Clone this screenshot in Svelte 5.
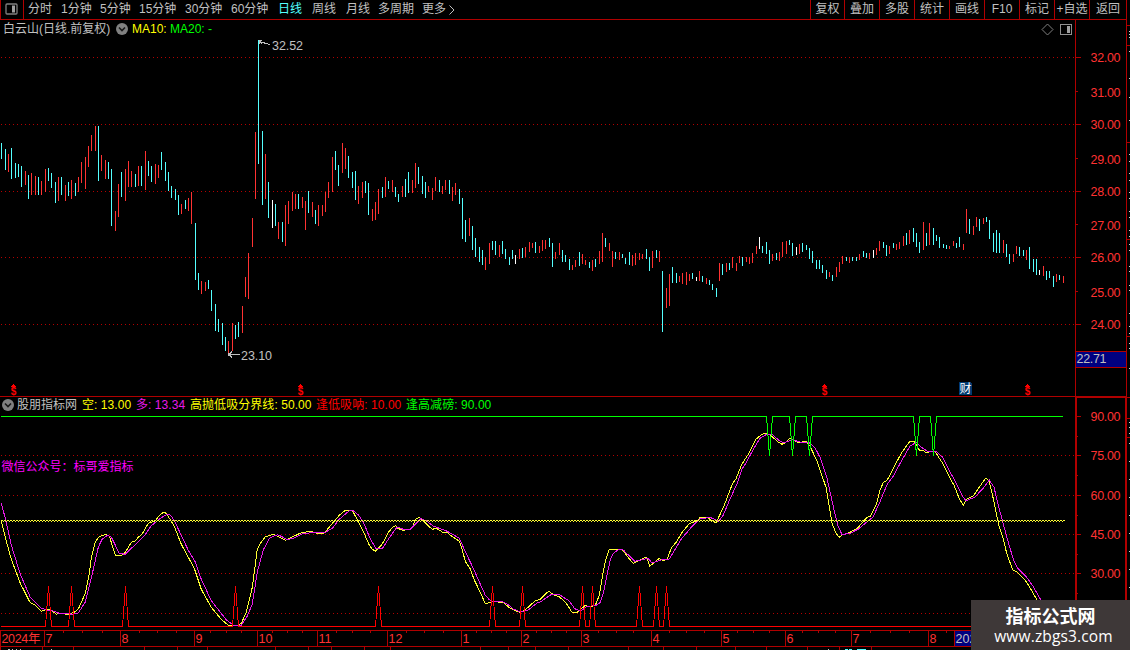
<script>
  const periods = [
    ['分时', 33], ['1分钟', 39], ['5分钟', 39], ['15分钟', 46], ['30分钟', 46], ['60分钟', 47],
    ['日线', 34], ['周线', 34], ['月线', 32], ['多周期', 44], ['更多', 26]
  ];
  const tools = [
    ['复权', 34], ['叠加', 35], ['多股', 35], ['统计', 35], ['画线', 35],
    ['F10', 35], ['标记', 35], ['+自选', 35], ['返回', 38]
  ];
  const legend = [
    ['空: 13.00', '#ffff00', 54], ['多: 13.34', '#e81ae8', 54], ['高抛低吸分界线: 50.00', '#ffff00', 126],
    ['逢低吸呐: 10.00', '#ff0000', 90], ['逢高减磅: 90.00', '#00ff00', 90]
  ];

  // Daily ranges, "x high low colour", stored in thirds of a pixel from each block's origin.
  const blocks = [
    [0, 120, `4 69 117 c,16 87 150 c,25 102 156 r,34 84 177 c,46 129 174 c,55 132 171 c,64 138 201 c,76 153 195 r,85 165 237 c,94 159 225 r,106 168 225 r,115 171 225 c,124 183 225 r,136 147 216 r,145 144 183 c,154 159 204 c,166 186 249 c,175 171 243 r,184 171 225 c,196 195 243 r,205 186 228 c,214 180 237 r,226 189 228 c,235 171 216 r,244 126 189 r,256 111 207 r,265 78 141 r,274 45 93 r,286 18 93 r,295 18 183 c,304 105 153 r,316 120 177 r,325 126 177 c,334 147 318 c,346 273 333 r,355 192 291 r,364 156 231 c,376 147 243 r,385 123 201 r,394 153 201 r,406 162 201 c,415 138 198 r,424 138 198 c,436 93 210 r,445 123 168 c,454 138 186 c,466 132 192 r,475 135 174 r,484 96 150 c,496 126 183 c,505 156 213 c,514 198 234 c,526 207 240 c,535 225 285 c,544 252 282 r,556 240 267 c,565 234 273 r,574 216 312 r,586 309 480 c,595 459 510 c,604 483 522 r,616 486 513 r,625 480 507 c,634 510 573 c,646 552 633 c,655 597 636 c,667 609 675 c,676 651 693 c,685 663 705 r,697 609 693 r,706 615 657 c,715 606 651 c,727 558 639 r,736 471 531 r,745 399 537 r,757 294 381 r,766 36 237 r`],
    [220, 30, `115 30 402 c,127 303 525 c,136 372 507 r,145 456 564 c,157 510 594 w,166 522 588 c,175 576 627 r,187 576 636 c,196 525 648 r,205 513 582 r,217 486 543 r,226 492 537 r,235 492 537 c,247 501 534 r,256 513 600 r,265 483 549 c,277 516 561 r,286 540 582 c,295 525 588 r,307 525 558 r,316 486 546 r,325 456 504 r,337 381 486 r,346 363 420 c,355 405 468 c,367 339 429 r,376 354 417 r,385 378 444 c,397 426 474 c,406 423 510 c,415 468 522 r,427 456 504 r,436 453 489 c,445 459 555 c,457 537 573 r,466 516 570 r,475 477 552 r,487 471 504 c,496 441 501 r,505 453 477 c,517 450 486 r,526 471 501 c,535 492 516 c,547 468 501 r,556 447 501 c,565 426 489 c,577 450 489 r,586 399 474 r,595 411 462 c,607 438 492 c,616 456 504 c,625 468 486 r,637 474 510 r,646 441 483 r,658 450 486 c,667 468 492 r,676 450 480 r,688 450 492 c,697 471 513 r,706 459 495 r,718 477 522 c`],
    [450, 170, `37 84 207 c,46 150 216 c,58 144 198 r,67 168 240 c,76 204 261 c,88 231 276 c,97 240 285 c,106 261 300 r,118 219 282 r,127 213 240 c,136 213 255 c,148 225 261 r,157 213 252 c,166 237 267 c,178 261 285 c,187 240 267 c,196 255 282 w,208 237 267 r,217 234 264 c,226 231 261 r,238 216 246 r,247 219 234 r,256 216 249 c,268 228 249 r,277 210 243 r,286 210 237 r,298 204 231 c,307 219 291 c,316 246 267 r,328 219 255 r,337 240 276 c,346 255 276 c,358 267 300 c,367 285 300 r,376 270 291 r,388 246 288 c,397 252 282 r,406 270 285 r,418 276 294 c,427 270 303 r,436 267 291 c,448 243 282 r,457 189 276 r,466 204 231 c,478 219 243 r,487 243 291 r,496 246 267 c,508 246 270 r,517 252 264 c,526 264 282 c,538 246 285 c,547 255 288 r,556 249 285 r,568 249 270 r,577 252 267 r,589 237 267 c,598 261 303 c,607 243 294 r,619 240 264 c,628 243 276 r,637 303 486 c,649 354 414 r,658 312 408 r,667 291 339 c,679 309 339 c,688 318 336 r,697 309 342 r,709 306 345 r,718 312 333 r,727 309 327 c,739 321 333 w,748 303 333 r,757 318 336 c,769 324 342 r,778 330 345 c,787 342 360 c,799 354 381 c`],
    [710, 190, `28 219 273 r,37 222 255 c,49 219 246 r,58 219 240 c,67 201 234 r,79 219 243 r,88 198 219 r,97 201 228 c,109 201 216 r,118 201 222 r,127 189 219 r,139 168 192 r,148 141 177 w,157 168 189 c,169 156 192 c,178 180 222 c,187 192 213 r,199 189 210 c,208 186 213 r,217 156 201 r,229 153 192 r,238 150 165 c,247 159 198 c,259 171 195 w,268 162 192 r,277 159 186 c,289 165 180 c,298 174 207 c,307 183 219 c,319 210 237 c,328 210 237 c,337 225 249 c,349 240 267 c,358 246 261 r,367 255 273 c,379 231 261 r,388 216 246 r,397 198 222 r,409 201 213 c,418 201 219 r,427 201 213 c,439 201 213 c,448 192 210 r,460 183 201 c,469 189 204 c,478 189 207 r,490 180 204 w,499 174 195 r,508 153 183 r,520 156 174 c,529 165 198 c,538 168 192 r,550 159 174 c,559 162 180 r,568 156 177 r,580 138 168 r,589 129 165 c,598 120 162 r,610 114 156 c,619 129 171 c,628 156 189 c,640 96 180 r,649 129 168 c,658 99 165 r,670 114 165 c,679 135 153 c,688 141 174 c,700 162 174 c,709 165 177 c,718 168 177 r,730 153 168 r,739 159 174 c,748 141 171 c,760 162 180 r,769 57 129 r,778 87 132 c,790 108 135 r,799 81 111 r,808 87 123 c,820 84 102 r,829 81 96 c,838 90 147 c,850 129 186 c,859 120 189 c,868 129 189 c,880 150 189 r,889 162 201 c,898 192 222 c,910 192 216 r,919 168 192 r,928 171 198 c,940 180 198 c,949 180 210 r,958 171 237 c,970 207 246 c,979 207 255 c,988 240 255 w,1000 228 258 r,1009 243 270 c,1018 243 264 c,1030 258 291 c,1039 252 276 r,1048 255 270 c,1060 258 279 r`]
  ];
  const tone = { r: '#ff3232', c: '#54ffff', w: '#ffffff' };
  const bars = blocks.flatMap(([ox, oy, s]) =>
    s.split(',').map((row) => {
      const [x, a, b, k] = row.split(' ');
      return { x: ox + Math.floor(+x / 3), y: oy + Math.round(+a / 3), h: Math.round((b - a) / 3), fill: tone[k] };
    })
  );

  const trace = (parts) =>
    parts.flatMap(([ox, oy, s]) =>
      s.split(' ').map((p) => {
        const [x, y] = p.split(',');
        return `${(ox + x / 3).toFixed(1)},${(oy + y / 3).toFixed(1)}`;
      })
    ).join(' ');

  const shortLine = trace([
    [0, 490, '4,94 16,142 34,208 61,280 90,337 106,346 124,364 142,358 154,360 169,373 175,370 205,373 223,367 235,357 256,310 268,250 274,202 286,157 295,142 316,133 328,138 346,196 364,196 376,187 394,157 406,153 415,142 427,131 445,100 466,92 478,76 490,67 499,70 523,109 544,163 583,235 604,298 634,352 664,388 685,406 712,406 724,400 739,367 757,292 772,178 781,160 796,140 820,133 856,151 904,128 934,124 946,129 970,130 976,125 1018,76'],
    [340, 490, '16,61 37,62 52,88 70,124 86,162 97,178 106,184 127,162 145,127 160,110 168,107 172,115 190,121 208,118 218,112 226,88 237,82 250,92 268,110 277,118 289,115 307,126 322,128 340,142 358,154 367,180 376,214 391,237 403,270 421,307 436,341 457,335 490,337 508,353 538,367 554,361 586,332 601,328 620,308 628,304 640,314 658,320 679,340 697,368 712,367 736,346 748,351 766,346 778,316 787,262 796,214 808,178 847,179 865,203 880,220 898,211 916,202 922,205 929,229 940,220 958,205 970,213 982,206 994,174 1010,155 1024,130 1048,101 1072,92'],
    [700, 400, '0,353 24,354 48,369 72,318 97,252 108,236 126,192 148,158 168,118 184,104 198,99 212,106 234,126 246,133 258,127 270,115 280,121 294,127 320,125 330,138 352,186 378,262 396,370 408,400 418,412 428,404 442,401 472,385 500,353 512,348 530,310 540,270 550,248 562,240 580,205 604,160 628,126 642,124 658,150 670,152 680,159 692,154 706,156 728,190 750,234 762,256 778,296 790,316 800,298 820,288 832,270 858,233 868,246 880,296 896,374 908,410 920,460 938,510 952,517 978,544 1000,580 1012,602 1030,640']
  ]);
  const longLine = trace([
    [0, 490, '4,40 16,85 34,165 61,253 91,322 124,355 142,360 154,361 178,370 205,370 214,373 235,369 256,336 274,264 295,172 306,148 322,136 334,141 358,190 376,193 436,134 454,107 484,83 502,72 512,76 523,92 541,130 565,181 586,216 604,268 634,332 680,391 700,405 724,405 742,378 757,342 772,246 790,180 808,145 832,134 844,139 862,149 880,145 910,130 946,128 976,127 997,115 1018,88'],
    [340, 490, '28,62 40,62 56,76 70,96 91,147 108,176 127,176 145,148 168,115 174,112 190,118 212,117 226,103 243,86 258,92 280,108 322,124 358,145 376,185 400,235 436,316 448,329 457,334 490,336 502,342 520,357 540,365 562,362 590,340 604,334 636,312 658,314 688,333 704,356 722,364 740,349 766,347 780,338 790,310 803,244 812,205 820,190 836,178 850,180 864,194 884,214 904,210 924,205 936,219 962,210 988,207 1024,147 1060,105'],
    [700, 400, '0,357 30,352 56,364 70,345 90,297 112,250 126,208 140,185 160,148 180,115 200,103 218,105 238,122 252,129 276,119 300,126 326,127 345,143 362,176 380,230 400,320 414,378 426,404 452,399 474,388 520,350 540,305 562,252 580,228 606,180 630,138 650,127 664,142 684,155 710,156 728,172 750,216 764,240 788,290 798,302 824,292 852,262 868,240 882,262 896,320 920,410 940,478 952,504 980,532 1000,560 1024,602 1040,640']
  ]);

  const spikes = (list, base, tip, end) =>
    `1,${base} ` + list.map((x) => `${x - 2.5},${base} ${x + 0.5},${tip} ${x + 3.5},${base}`).join(' ') + ` ${end},${base}`;
  const buyLine = spikes([48, 71, 125, 235, 378, 492, 522, 582, 592, 639, 656, 666], 626.5, 586, 1064);
  const sellLine = spikes([769, 792, 809, 916, 933], 416.5, 456, 1063);

  const prices = [['32.00', 57], ['31.00', 91], ['30.00', 124], ['29.00', 158], ['28.00', 191], ['27.00', 224], ['26.00', 257], ['25.00', 291], ['24.00', 324]];
  const levels = [['90.00', 416], ['75.00', 455], ['60.00', 495], ['45.00', 534], ['30.00', 573]];
  const months = [['7', 44], ['8', 120], ['9', 194], ['10', 257], ['11', 317], ['12', 387], ['1', 461], ['2', 521], ['3', 581], ['4', 651], ['5', 721], ['6', 785], ['7', 851], ['8', 928]];
  const weekTicks = [63, 82, 102, 139, 157, 176, 210, 226, 241, 272, 287, 302, 336, 352, 370, 406, 424, 443, 476, 491, 506, 536, 551, 566, 598, 616, 633, 669, 686, 704, 737, 753, 769, 802, 818, 835, 870, 890, 909, 946];
  const tabTicks = [0, 42, 73, 144, 177, 207, 275, 308, 331, 364, 390, 480, 508, 535, 568, 628, 663, 696, 735, 766, 807, 839, 871];
  const clipped = [[8, 2], [12, 1], [16, 1], [20, 1], [51, 1], [828, 1]];
  const edgeLines = [25, 45, 142, 239, 336, 397, 418, 437];
  const edgeMarks = [31, 34, 37, 51, 78, 97, 120, 154, 161, 173, 180, 192, 198, 211, 217, 230, 236, 244, 250, 266, 271, 285, 290, 313, 326, 333, 343, 348, 368, 422, 427, 433, 443, 461, 479, 497, 515, 533, 551, 569, 587];
  const dividends = [13, 300, 824, 1027];
</script>

{#snippet chevron()}
  <svg class="chev" width="12" height="12" viewBox="0 0 12 12">
    <circle cx="6" cy="6" r="6" fill="#808080" />
    <path d="M3 4.5 6 7.5 9 4.5" fill="none" stroke="#181818" stroke-width="1.6" />
  </svg>
{/snippet}

<div class="app">
  <header>
    <div class="toggle">
      <svg width="13" height="12" viewBox="0 0 13 12">
        <rect x="1" y="1" width="11" height="10" rx="1" fill="none" stroke="#808080" stroke-width="1.3" />
        <rect x="7" y="2.5" width="3" height="7" fill="#a0a0a0" />
      </svg>
    </div>
    <nav>
      {#each periods as [name, w]}
        <span class:active={name === '日线'} style:width="{w}px">{name}</span>
      {/each}
      <svg width="8" height="10" viewBox="0 0 8 10"><path d="M1.5 .5 6 5 1.5 9.5" fill="none" stroke="#c0c0c0" /></svg>
    </nav>
    <div class="tools">
      {#each tools as [name, w]}
        <span style:width="{w}px">{name}</span>
      {/each}
    </div>
  </header>

  <main>
    <section class="price">
      <svg width="1130" height="377" viewBox="0 20 1130 377" shape-rendering="crispEdges">
        {#each prices as [label, y], i}
          {#if i % 2 === 0}
            <line x1="1" x2="1074" y1={y + 0.5} y2={y + 0.5} class="dots" />
          {/if}
          <rect x="1076" {y} width={i % 2 === 0 ? 5 : 2} height="1" class="rule" />
          <text x="1090.5" y={y + (i % 2 ? 6 : 5)} textLength="30" class="axis">{label}</text>
        {/each}
        {#each bars as b}
          <rect x={b.x} y={b.y} width="1" height={b.h} fill={b.fill} />
        {/each}
        <g stroke="#c0c0c0" fill="none">
          <path d="M259 41.5 270 44.5M259 44V40.5H262M260 42 262 44" />
          <path d="M229 354.5H240M232 351.5 229 354.5 232 357.5" />
        </g>
        <rect x="228" y="353" width="2" height="3" fill="#c0c0c0" />
        <text x="272" y="50" textLength="31" class="note">32.52</text>
        <text x="241" y="360" textLength="31" class="note">23.10</text>
        {#each dividends as x}
          <path d="M{x - 2} 386.5 L{x + 0.5} 384 L{x + 3} 386.5Z" fill="#f00" />
          <text x={x + 0.5} y="395" class="div">$</text>
        {/each}
        <path d="M959 382H970L972 384V395H959Z" fill="#003a70" />
        <text x="959.5" y="393" class="fin">财</text>
        <rect x="1075" y="20" width="1" height="377" class="rule" />
        <rect x="1126" y="20" width="1" height="377" class="rule" />
        <rect x="1076" y="351" width="50" height="17" class="rule" />
        <rect x="1076" y="352" width="50" height="15" fill="#000080" />
        <text x="1076.5" y="363" textLength="30" class="note">22.71</text>
        <rect x="0" y="396" width="1127" height="1" class="rule" />
        <path d="M1047.5 24 1053 29.5 1047.5 35 1042 29.5Z" fill="none" stroke="#808080" shape-rendering="auto" />
        <rect x="1060.5" y="24.5" width="11" height="10" rx="1" fill="none" stroke="#909090" />
        <rect x="1067" y="26" width="3" height="7" fill="#a0a0a0" />
      </svg>
      <div class="caption top">
        <span class="stock">白云山(日线.前复权)</span>
        {@render chevron()}
        <span class="ma10">MA10:</span>
        <span class="ma20">MA20: -</span>
      </div>
    </section>

    <section class="indicator">
      <svg width="1130" height="253" viewBox="0 397 1130 253" shape-rendering="crispEdges">
        {#each [455, 495, 534, 573, 613] as y}
          <line x1="1" x2="1074" y1={y + 0.5} y2={y + 0.5} class="dots" />
        {/each}
        <rect x="1075" y="397" width="2" height="233" class="rule" />
        <rect x="1125" y="397" width="2" height="253" class="rule" />
        <rect x="1075" y="397" width="52" height="1" class="rule" />
        {#each levels as [label, y]}
          <rect x="1077" {y} width="4" height="1" class="rule" />
          <rect x="1077" y={y + 20} width="1" height="1" class="rule" />
          <text x="1090.5" y={y + 5} textLength="30" class="axis">{label}</text>
        {/each}
        <g fill="none">
          <polyline points={shortLine} stroke="#ffff32" />
          <polyline points={longLine} stroke="#e81ae8" />
          <path d="M1 520.5H1065" stroke="#ffff32" stroke-dasharray="2 1" />
          <path d="M3 521.5H1065" stroke="#ffff32" stroke-dasharray="1 2" />
          <polyline points={buyLine} stroke="#ff0000" />
          <polyline points={sellLine} stroke="#00ff00" />
        </g>
        <text x="1.5" y="470.5" class="tag">微信公众号：标哥爱指标</text>

        <rect x="0" y="630" width="1127" height="1" class="rule" />
        <rect x="0" y="646" width="1127" height="1" class="rule" />
        <rect x="0" y="630" width="1" height="17" class="rule" />
        <text x="1.5" y="643" textLength="39" class="axis">2024年</text>
        {#each months as [label, x]}
          <rect {x} y="630" width="1" height="17" class="rule" />
          <text x={x + 1.5} y="643" class="axis">{label}</text>
        {/each}
        {#each weekTicks as x}
          <rect {x} y="631" width="1" height="2" class="rule" />
        {/each}
        {#each tabTicks as x}
          <rect {x} y="647" width="1" height="3" class="rule" />
        {/each}
        <rect x="954" y="630" width="1" height="17" class="rule" />
        <rect x="955" y="631" width="60" height="15" fill="#000080" />
        <text x="955.5" y="643" class="note">202</text>
        {#each clipped as [x, w]}
          <rect {x} y="649" width={w} height="1" fill="#c0c0c0" />
        {/each}
        <path d="M845 649.5H848M849 649.5H852M857 649.5H866" stroke="#54ffff" />
      </svg>
      <div class="caption sub">
        {@render chevron()}
        <span class="name">股朋指标网</span>
        {#each legend as [label, color, w]}
          <span style:color={color} style:width="{w}px">{label}</span>
        {/each}
      </div>
    </section>
  </main>

  <svg class="edge" width="4" height="650" shape-rendering="crispEdges">
    <rect width="1" height="25" x="0" class="rule" />
    {#each edgeLines as y}
      <rect x="0" {y} width="4" height="1" class="rule" />
    {/each}
    {#each edgeMarks as y}
      <rect x="3" {y} width="1" height="1" fill="#d0d0d0" />
    {/each}
  </svg>

  <aside>
    <strong>指标公式网</strong>
    <span>www.zbgs3.com</span>
  </aside>
</div>

<style>
  :global(body) { margin: 0; background: #000; overflow: hidden; }
  .app {
    position: relative; width: 1130px; height: 650px; overflow: hidden; background: #000;
    color: #c0c0c0; font: 12px/18px "Liberation Sans", "Noto Sans CJK SC", sans-serif; white-space: nowrap;
  }
  svg { display: block; flex: none; }
  .rule { fill: #b00000; }
  .dots { stroke: #b40000; stroke-dasharray: 1 3; }
  header { display: flex; box-sizing: border-box; width: 1127px; height: 20px; border-bottom: 1px solid #b00000; }
  .toggle {
    display: flex; box-sizing: border-box; width: 24px; height: 19px; padding: 3px 0 0 4px;
    border: solid #b00000; border-width: 0 1px;
  }
  nav { display: flex; align-items: center; height: 19px; padding-left: 4px; }
  nav span { line-height: 19px; }
  .active { color: #54ffff; }
  .tools { display: flex; margin-left: auto; line-height: 19px; }
  .tools span { box-sizing: border-box; height: 19px; border-left: 1px solid #b00000; text-align: center; }
  .tools span:last-child { border-right: 1px solid #b00000; }
  section { position: relative; }
  .price { height: 377px; }
  .indicator { height: 253px; }
  .caption { position: absolute; left: 0; display: flex; align-items: center; height: 18px; line-height: 19px; }
  .top { top: 0; padding-left: 3px; }
  .stock { width: 113px; }
  .ma10 { width: 38px; margin-left: 4px; color: #ff0; }
  .ma20 { color: #0f0; }
  .sub { top: -1px; padding-left: 2px; }
  .sub span + span { letter-spacing: 0.06px; }
  .name { width: 65px; margin-left: 3px; }
  text { font: 12.5px "Liberation Sans", "Noto Sans CJK SC", sans-serif; }
  .axis { fill: #ff3232; }
  .note { fill: #c0c0c0; }
  .div { font-size: 10px; font-weight: bold; fill: #f00; text-anchor: middle; }
  .fin { font-size: 12px; fill: #fff; }
  .tag { font-size: 12px; fill: #f0f; }
  .edge { position: absolute; left: 1126px; top: 0; }
  aside {
    position: absolute; left: 971px; top: 600px; box-sizing: border-box; width: 159px; height: 50px; padding-top: 4px;
    display: flex; flex-direction: column; align-items: center; background: #3e3838; color: #fff;
    font-family: "Noto Sans CJK SC", sans-serif;
  }
  strong { font-size: 18px; line-height: 22px; }
  aside span { padding-left: 6px; font: 15.5px/20px "Open Sans", "Noto Sans", sans-serif; letter-spacing: 0.15px; }
</style>
